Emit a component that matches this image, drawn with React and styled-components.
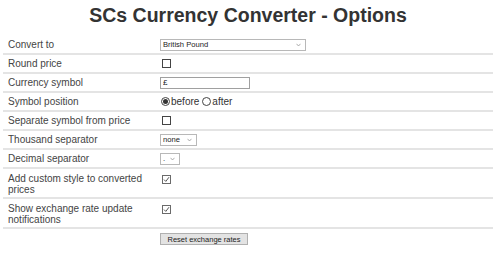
import React from "react";
import styled, { createGlobalStyle } from "styled-components";

const GlobalStyle = createGlobalStyle`
  body {
    margin: 0;
    background: #fff;
    font-family: "Liberation Sans", Arial, sans-serif;
  }
`;

const Page = styled.div`
  width: 500px;
  box-sizing: border-box;
  padding: 0 7px 0 3px;
`;

const Title = styled.h1`
  margin: 0 0 10px;
  padding-top: 4px;
  font-size: 19.5px;
  line-height: 22px;
  font-weight: bold;
  text-align: center;
  color: #333;
`;

const Table = styled.div`
  display: flex;
  flex-direction: column;
`;

const Row = styled.div`
  display: grid;
  grid-template-columns: 157px 1fr;
  align-items: ${(p) => (p.$tall ? "start" : "center")};
  min-height: ${(p) => (p.$tall ? "22px" : "17px")};
  padding: ${(p) => (p.$tall ? "4px 0 2px" : "0")};
  border-bottom: ${(p) => (p.$last ? "none" : "2px solid #e4e4e4")};
`;

const Label = styled.div`
  padding-left: 5px;
  padding-right: 14px;
  font-size: 10px;
  line-height: 11px;
  color: #444;
`;

const Control = styled.div`
  display: flex;
  align-items: center;
  padding-top: ${(p) => (p.$tall ? "2px" : "0")};
`;

const SelectWrap = styled.div`
  position: relative;
  width: ${(p) => p.$width}px;
  height: 12px;
`;

const Select = styled.select`
  display: block;
  appearance: none;
  box-sizing: border-box;
  width: 100%;
  height: 12px;
  margin: 0;
  padding: 0 0 0 2px;
  border: 1px solid #b8b8b8;
  border-radius: 0;
  background: #fff;
  font-family: "Liberation Sans", Arial, sans-serif;
  font-size: 7.6px;
  line-height: 10px;
  color: #222;
  outline: none;
`;

const Chevron = styled.svg`
  position: absolute;
  right: 5px;
  top: 4px;
  width: 5px;
  height: 4px;
  pointer-events: none;
`;

const TextInput = styled.input`
  display: block;
  box-sizing: border-box;
  width: 90px;
  height: 12px;
  margin: 0;
  padding: 0 0 0 2px;
  border: 1px solid #a0a0a0;
  font-family: "Liberation Sans", Arial, sans-serif;
  font-size: 8px;
  color: #222;
  outline: none;
`;

const Box = styled.span`
  box-sizing: border-box;
  display: inline-flex;
  align-items: center;
  justify-content: center;
  width: 9px;
  height: 9px;
  margin-left: 2px;
  border: 1px solid ${(p) => (p.$checked ? "#6a6a6a" : "#444")};
  background: #fff;
`;

const RadioGroup = styled.div`
  display: flex;
  align-items: center;
  margin-left: 1px;
  font-size: 10px;
  color: #333;
`;

const Radio = styled.span`
  box-sizing: border-box;
  display: inline-flex;
  align-items: center;
  justify-content: center;
  width: 9px;
  height: 9px;
  margin-right: 1px;
  border-radius: 50%;
  border: 1px solid #444;

  &::after {
    content: "";
    width: 5px;
    height: 5px;
    border-radius: 50%;
    background: ${(p) => (p.$on ? "#333" : "transparent")};
  }
`;

const RadioText = styled.span`
  margin-right: 3px;
`;

const Button = styled.button`
  box-sizing: border-box;
  width: 88px;
  height: 12px;
  margin: 3px 0 0;
  padding: 0;
  border: 1px solid #b0b0b0;
  background: #e3e3e3;
  font-family: "Liberation Sans", Arial, sans-serif;
  font-size: 7.5px;
  color: #222;
`;

const ChevronIcon = () => (
  <Chevron viewBox="0 0 5 4">
    <path d="M0.5 0.8 L2.5 3 L4.5 0.8" fill="none" stroke="#999" strokeWidth="0.8" />
  </Chevron>
);

const Dropdown = ({ width, value }) => (
  <SelectWrap $width={width}>
    <Select defaultValue={value}>
      <option>{value}</option>
    </Select>
    <ChevronIcon />
  </SelectWrap>
);

const Checkbox = ({ checked }) => (
  <Box $checked={checked}>
    {checked && (
      <svg width="7" height="7" viewBox="0 0 7 7">
        <path d="M1 3.6 L2.8 5.4 L6 1.2" fill="none" stroke="#555" strokeWidth="1" />
      </svg>
    )}
  </Box>
);

export default function App() {
  return (
    <>
      <GlobalStyle />
      <Page>
        <Title>SCs Currency Converter - Options</Title>
        <Table>
          <Row>
            <Label>Convert to</Label>
            <Control>
              <Dropdown width={146} value="British Pound" />
            </Control>
          </Row>
          <Row>
            <Label>Round price</Label>
            <Control>
              <Checkbox />
            </Control>
          </Row>
          <Row>
            <Label>Currency symbol</Label>
            <Control>
              <TextInput defaultValue="£" />
            </Control>
          </Row>
          <Row>
            <Label>Symbol position</Label>
            <Control>
              <RadioGroup>
                <Radio $on />
                <RadioText>before</RadioText>
                <Radio />
                <RadioText>after</RadioText>
              </RadioGroup>
            </Control>
          </Row>
          <Row>
            <Label>Separate symbol from price</Label>
            <Control>
              <Checkbox />
            </Control>
          </Row>
          <Row>
            <Label>Thousand separator</Label>
            <Control>
              <Dropdown width={37} value="none" />
            </Control>
          </Row>
          <Row>
            <Label>Decimal separator</Label>
            <Control>
              <Dropdown width={20} value="." />
            </Control>
          </Row>
          <Row $tall>
            <Label>Add custom style to converted prices</Label>
            <Control $tall>
              <Checkbox checked />
            </Control>
          </Row>
          <Row $tall>
            <Label>Show exchange rate update notifications</Label>
            <Control $tall>
              <Checkbox checked />
            </Control>
          </Row>
          <Row $last>
            <Label />
            <Control>
              <Button>Reset exchange rates</Button>
            </Control>
          </Row>
        </Table>
      </Page>
    </>
  );
}
